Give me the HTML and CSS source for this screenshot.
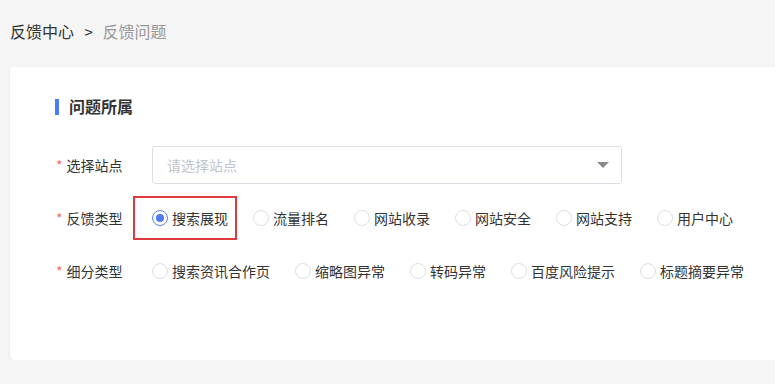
FILE: index.html
```html
<!DOCTYPE html>
<html>
<head>
    <meta charset="utf-8">
    <title>反馈问题</title>
    <link rel="stylesheet" href="styles.css">
</head>
<body>
    <div class="breadcrumb">
        <span class="crumb">反馈中心</span>
        <span class="sep">&gt;</span>
        <span class="crumb current">反馈问题</span>
    </div>
    <div class="card">
        <h2 class="section-title">问题所属</h2>

        <div class="form-row">
            <label class="form-label"><span class="req">*</span>选择站点</label>
            <div class="select">
                <span class="placeholder">请选择站点</span>
                <span class="arrow"></span>
            </div>
        </div>

        <div class="form-row">
            <label class="form-label"><span class="req">*</span>反馈类型</label>
            <div class="radio-group">
                <div class="radio checked highlight"><span class="dot"></span>搜索展现</div>
                <div class="radio"><span class="dot"></span>流量排名</div>
                <div class="radio"><span class="dot"></span>网站收录</div>
                <div class="radio"><span class="dot"></span>网站安全</div>
                <div class="radio"><span class="dot"></span>网站支持</div>
                <div class="radio"><span class="dot"></span>用户中心</div>
            </div>
        </div>

        <div class="form-row">
            <label class="form-label"><span class="req">*</span>细分类型</label>
            <div class="radio-group">
                <div class="radio"><span class="dot"></span>搜索资讯合作页</div>
                <div class="radio"><span class="dot"></span>缩略图异常</div>
                <div class="radio"><span class="dot"></span>转码异常</div>
                <div class="radio"><span class="dot"></span>百度风险提示</div>
                <div class="radio"><span class="dot"></span>标题摘要异常</div>
            </div>
        </div>
    </div>
</body>
</html>
```

FILE: styles.css
```css
body {
    margin: 0;
    padding: 0;
    background-color: #f5f5f5;
    font-family: "Noto Sans CJK SC", "Noto Sans", sans-serif;
    color: #333;
    overflow: hidden;
}
.breadcrumb {
    padding: 20px 10px 0;
    height: 22px;
    line-height: 22px;
    font-size: 16px;
    color: #333;
}
.sep {
    margin: 0 6px 0 7px;
    font-size: 15px;
}
.crumb.current {
    color: #999;
}
.card {
    margin: 25px 0 0 10px;
    width: 820px;
    height: 293px;
    box-sizing: border-box;
    padding: 27px 46px 0;
    background-color: #fff;
    border-radius: 4px;
    box-shadow: 0 1px 3px rgba(0, 0, 0, 0.08);
}
.section-title {
    position: relative;
    margin: 0;
    height: 24px;
    line-height: 24px;
    font-size: 16px;
    font-weight: bold;
    color: #333;
    padding-left: 13px;
}
.section-title::before {
    content: "";
    position: absolute;
    left: -1px;
    top: 5px;
    width: 4px;
    height: 16px;
    background-color: #4b7bf5;
}
.form-row {
    display: flex;
    align-items: center;
    height: 38px;
    margin-top: 15px;
}
.section-title + .form-row {
    margin-top: 28px;
}
.form-label {
    width: 96px;
    flex-shrink: 0;
    font-size: 14px;
    color: #333;
}
.req {
    color: #f56c6c;
    margin-right: 4px;
}
.select {
    width: 470px;
    height: 38px;
    box-sizing: border-box;
    border: 1px solid #dcdfe6;
    border-radius: 3px;
    display: flex;
    align-items: center;
    justify-content: space-between;
    padding: 0 12px 0 14px;
}
.placeholder {
    font-size: 14px;
    color: #c0c4cc;
}
.arrow {
    width: 0;
    height: 0;
    border-left: 6px solid transparent;
    border-right: 6px solid transparent;
    border-top: 6px solid #8a8a8a;
}
.radio-group {
    display: flex;
    align-items: center;
}
.radio {
    position: relative;
    display: flex;
    align-items: center;
    font-size: 14px;
    line-height: 20px;
    color: #333;
    margin-right: 25px;
    white-space: nowrap;
}
.dot {
    width: 16px;
    height: 16px;
    box-sizing: border-box;
    border: 1px solid #dcdfe6;
    border-radius: 50%;
    margin-right: 4px;
    position: relative;
}
.radio.checked .dot {
    border-color: #5b84ea;
}
.radio.checked .dot::after {
    content: "";
    position: absolute;
    left: 3px;
    top: 3px;
    width: 8px;
    height: 8px;
    border-radius: 50%;
    background-color: #4d7cf2;
}
/* 红框标注 */
.highlight::before {
    content: "";
    position: absolute;
    left: -19px;
    right: -9px;
    top: -12px;
    bottom: -12px;
    border: 2px solid #e0393e;
}
```
